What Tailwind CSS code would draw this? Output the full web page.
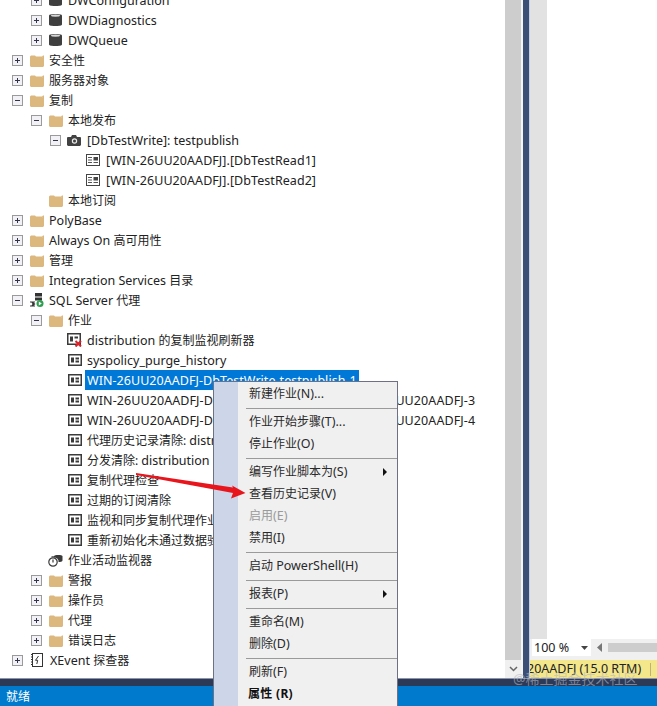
<!DOCTYPE html>
<html lang="zh-CN">
  <head>
    <meta charset="UTF-8" />
    <title>SSMS 对象资源管理器</title>
    <script src="https://cdn.jsdelivr.net/npm/@tailwindcss/browser@4"></script>
  </head>

  <body class="w-[657px] h-[706px] overflow-hidden bg-white">
    <svg width="0" height="0" class="absolute">
      <defs>
        <symbol id="plus" viewBox="0 0 11 11">
          <rect x="0.5" y="0.5" width="10" height="10" fill="#f1f1f6" stroke="#9a9a9a" />
          <path d="M3 5.5h5M5.5 3v5" stroke="#33334a" fill="none" />
        </symbol>
        <symbol id="minus" viewBox="0 0 11 11">
          <rect x="0.5" y="0.5" width="10" height="10" fill="#f1f1f6" stroke="#9a9a9a" />
          <path d="M3 5.5h5" stroke="#33334a" fill="none" />
        </symbol>
        <symbol id="folder" viewBox="0 0 14 13">
          <path d="M0 2.5 1 1.500h4l1 1h6l1 -1h1v10.500l-1 1H1l-1-1z" fill="#dcb87f" />
          <path d="M1 3.500h11l1-1.500v1.500z" fill="#e6cc9f" />
        </symbol>
        <symbol id="db" viewBox="0 0 13 14">
          <path d="M0 2.5C0 .5 13 .5 13 2.5v9c0 2-13 2-13 0z" fill="#3f3f3f" />
          <ellipse cx="6.5" cy="2.6" rx="4.6" ry="1.2" fill="#d8d8d8" />
        </symbol>
        <symbol id="camera" viewBox="0 0 14 11">
          <path d="M0 2.5 1 2h3l1-2h4l1 2h3l1 .5V10l-1 1H1l-1-1z" fill="#424242" />
          <circle cx="7.5" cy="6" r="2.7" fill="#ececec" />
          <circle cx="7.5" cy="6" r="1.5" fill="#424242" />
        </symbol>
        <symbol id="sub" viewBox="0 0 14 12">
          <rect x="0.5" y="0.5" width="13" height="11" fill="#fff" stroke="#444" />
          <path d="M2 3.500h4M2 6h4M2 8.500h4" stroke="#555" fill="none" />
          <rect x="7.5" y="3" width="4.5" height="3.5" fill="#444" />
          <path d="M7.500 8.500h4.500" stroke="#555" fill="none" />
        </symbol>
        <symbol id="job" viewBox="0 0 14 12">
          <rect x="0.75" y="0.75" width="12.5" height="10.5" fill="#fff" stroke="#3a3a3a" stroke-width="1.5" />
          <rect x="3" y="3.5" width="3" height="5" fill="#3a3a3a" />
          <rect x="7.5" y="3.5" width="3.5" height="2" fill="#3a3a3a" />
          <rect x="7.5" y="6.5" width="3.5" height="2" fill="#3a3a3a" />
        </symbol>
        <symbol id="joberr" viewBox="0 0 15 14">
          <rect x="0.75" y="0.75" width="12.5" height="10.5" fill="#fff" stroke="#3a3a3a" stroke-width="1.5" />
          <rect x="3" y="3.5" width="3" height="5" fill="#3a3a3a" />
          <rect x="7.5" y="3.5" width="3.5" height="2" fill="#3a3a3a" />
          <path d="M8.500 8l5.500 5.500M14 8l-5.500 5.500" stroke="#d8232a" stroke-width="2" fill="none" />
        </symbol>
        <symbol id="agent" viewBox="0 0 14 14">
          <rect x="5" y="0" width="7" height="3.5" fill="#333" />
          <rect x="5" y="4.5" width="7" height="3" fill="#333" />
          <path d="M0 8.500h5v1H3.500l2 1.500-2 1.500H5v1H0v-1h1.500l1-1.500-1-1.500H0z" fill="#333" />
          <circle cx="10" cy="10.500" r="3.500" fill="#2e9e4f" />
          <path d="M8.800 8.500v4l3-2z" fill="#fff" />
        </symbol>
        <symbol id="monitor" viewBox="0 0 15 13">
          <path d="M6 2C6 .5 14.500 .5 14.500 2v4.500c0 1-2.500 1.500-4 1.500V6.500A4.500 4.500 0 0 0 6 3.500z" fill="#3a3a3a" />
          <circle cx="5" cy="8" r="4.200" fill="#fff" stroke="#3a3a3a" stroke-width="1.200" />
          <path d="M5 5.500V8.500" stroke="#3a3a3a" stroke-width="1.200" fill="none" />
          <path d="M3.500 2.800h3" stroke="#3a3a3a" fill="none" />
        </symbol>
        <symbol id="xevent" viewBox="0 0 12 14">
          <rect x="1.500" y="0.500" width="10" height="13" fill="#fff" stroke="#333" />
          <path d="M0 1.500h1.500M0 4h1.500M0 6.500h1.500M0 9h1.500M0 11.500h1.500" stroke="#333" fill="none" />
          <path d="M7.500 3 4.500 7.300h2.200L5.800 11" stroke="#333" fill="none" />
        </symbol>
      </defs>
    </svg>

    <div class="relative w-[657px] h-[706px] flex flex-col overflow-hidden font-['Noto_Sans','Noto_Sans_CJK_SC',sans-serif] text-[12px] text-[#222] [&_b]:font-normal [&_b]:text-[12.5px]">
      <div class="flex h-[678px] overflow-hidden">
        <!-- arvore -->
        <div class="w-[505px] shrink-0 overflow-hidden -mt-[10px] whitespace-nowrap [&>div>span]:mt-[2px]">
          <div class="flex items-center h-[20px] pl-[27px]"><svg class="w-[11px] h-[11px] mx-[4px]"><use href="#plus" /></svg><svg class="w-[13px] h-[14px] mx-[3px]"><use href="#db" /></svg><span class="ml-[3px]"><b>DWConfiguration</b></span></div>
          <div class="flex items-center h-[20px] pl-[27px]"><svg class="w-[11px] h-[11px] mx-[4px]"><use href="#plus" /></svg><svg class="w-[13px] h-[14px] mx-[3px]"><use href="#db" /></svg><span class="ml-[3px]"><b>DWDiagnostics</b></span></div>
          <div class="flex items-center h-[20px] pl-[27px]"><svg class="w-[11px] h-[11px] mx-[4px]"><use href="#plus" /></svg><svg class="w-[13px] h-[14px] mx-[3px]"><use href="#db" /></svg><span class="ml-[3px]"><b>DWQueue</b></span></div>
          <div class="flex items-center h-[20px] pl-[8px]"><svg class="w-[11px] h-[11px] mx-[4px]"><use href="#plus" /></svg><svg class="w-[14px] h-[13px] mx-[3px]"><use href="#folder" /></svg><span class="ml-[2px]">安全性</span></div>
          <div class="flex items-center h-[20px] pl-[8px]"><svg class="w-[11px] h-[11px] mx-[4px]"><use href="#plus" /></svg><svg class="w-[14px] h-[13px] mx-[3px]"><use href="#folder" /></svg><span class="ml-[2px]">服务器对象</span></div>
          <div class="flex items-center h-[20px] pl-[8px]"><svg class="w-[11px] h-[11px] mx-[4px]"><use href="#minus" /></svg><svg class="w-[14px] h-[13px] mx-[3px]"><use href="#folder" /></svg><span class="ml-[2px]">复制</span></div>
          <div class="flex items-center h-[20px] pl-[27px]"><svg class="w-[11px] h-[11px] mx-[4px]"><use href="#minus" /></svg><svg class="w-[14px] h-[13px] mx-[3px]"><use href="#folder" /></svg><span class="ml-[2px]">本地发布</span></div>
          <div class="flex items-center h-[20px] pl-[46px]"><svg class="w-[11px] h-[11px] mx-[4px]"><use href="#minus" /></svg><svg class="w-[14px] h-[11px] mx-[2px]"><use href="#camera" /></svg><span class="ml-[4px]"><b>[DbTestWrite]: testpublish</b></span></div>
          <div class="flex items-center h-[20px] pl-[84px]"><svg class="w-[14px] h-[12px] mx-[2px]"><use href="#sub" /></svg><span class="ml-[4px] tracking-[0.06px]"><b>[WIN-26UU20AADFJ].[DbTestRead1]</b></span></div>
          <div class="flex items-center h-[20px] pl-[84px]"><svg class="w-[14px] h-[12px] mx-[2px]"><use href="#sub" /></svg><span class="ml-[4px] tracking-[0.06px]"><b>[WIN-26UU20AADFJ].[DbTestRead2]</b></span></div>
          <div class="flex items-center h-[20px] pl-[46px]"><svg class="w-[14px] h-[13px] mx-[3px]"><use href="#folder" /></svg><span class="ml-[2px]">本地订阅</span></div>
          <div class="flex items-center h-[20px] pl-[8px]"><svg class="w-[11px] h-[11px] mx-[4px]"><use href="#plus" /></svg><svg class="w-[14px] h-[13px] mx-[3px]"><use href="#folder" /></svg><span class="ml-[2px]"><b>PolyBase</b></span></div>
          <div class="flex items-center h-[20px] pl-[8px]"><svg class="w-[11px] h-[11px] mx-[4px]"><use href="#plus" /></svg><svg class="w-[14px] h-[13px] mx-[3px]"><use href="#folder" /></svg><span class="ml-[2px]"><b>Always On </b>高可用性</span></div>
          <div class="flex items-center h-[20px] pl-[8px]"><svg class="w-[11px] h-[11px] mx-[4px]"><use href="#plus" /></svg><svg class="w-[14px] h-[13px] mx-[3px]"><use href="#folder" /></svg><span class="ml-[2px]">管理</span></div>
          <div class="flex items-center h-[20px] pl-[8px]"><svg class="w-[11px] h-[11px] mx-[4px]"><use href="#plus" /></svg><svg class="w-[14px] h-[13px] mx-[3px]"><use href="#folder" /></svg><span class="ml-[2px]"><b>Integration Services </b>目录</span></div>
          <div class="flex items-center h-[20px] pl-[8px]"><svg class="w-[11px] h-[11px] mx-[4px]"><use href="#minus" /></svg><svg class="w-[14px] h-[14px] mx-[3px]"><use href="#agent" /></svg><span class="ml-[2px]"><b>SQL Server </b>代理</span></div>
          <div class="flex items-center h-[20px] pl-[27px]"><svg class="w-[11px] h-[11px] mx-[4px]"><use href="#minus" /></svg><svg class="w-[14px] h-[13px] mx-[3px]"><use href="#folder" /></svg><span class="ml-[2px]">作业</span></div>
          <div class="flex items-center h-[20px] pl-[65px]"><svg class="w-[15px] h-[14px] mx-[2px]"><use href="#joberr" /></svg><span class="ml-[3px]"><b>distribution </b>的复制监视刷新器</span></div>
          <div class="flex items-center h-[20px] pl-[65px]"><svg class="w-[14px] h-[12px] mx-[3px]"><use href="#job" /></svg><span class="ml-[2px]"><b>syspolicy_purge_history</b></span></div>
          <div class="flex items-center h-[20px] pl-[65px]"><svg class="w-[14px] h-[12px] mx-[3px]"><use href="#job" /></svg><span class="mt-0! px-[2px] h-[20px] bg-[#0078d7] text-white leading-[21px] tracking-[0.05px]"><b>WIN-26UU20AADFJ-DbTestWrite-testpublish-1</b></span></div>
          <div class="flex items-center h-[20px] pl-[65px]"><svg class="w-[14px] h-[12px] mx-[3px]"><use href="#job" /></svg><span class="ml-[2px] tracking-[0.09px]"><b>WIN-26UU20AADFJ-DbTestWrite-testpublish-WIN-26UU20AADFJ-3</b></span></div>
          <div class="flex items-center h-[20px] pl-[65px]"><svg class="w-[14px] h-[12px] mx-[3px]"><use href="#job" /></svg><span class="ml-[2px] tracking-[0.09px]"><b>WIN-26UU20AADFJ-DbTestWrite-testpublish-WIN-26UU20AADFJ-4</b></span></div>
          <div class="flex items-center h-[20px] pl-[65px]"><svg class="w-[14px] h-[12px] mx-[3px]"><use href="#job" /></svg><span class="ml-[2px]">代理历史记录清除: <b>distribution</b></span></div>
          <div class="flex items-center h-[20px] pl-[65px]"><svg class="w-[14px] h-[12px] mx-[3px]"><use href="#job" /></svg><span class="ml-[2px]">分发清除: <b>distribution</b></span></div>
          <div class="flex items-center h-[20px] pl-[65px]"><svg class="w-[14px] h-[12px] mx-[3px]"><use href="#job" /></svg><span class="ml-[2px]">复制代理检查</span></div>
          <div class="flex items-center h-[20px] pl-[65px]"><svg class="w-[14px] h-[12px] mx-[3px]"><use href="#job" /></svg><span class="ml-[2px]">过期的订阅清除</span></div>
          <div class="flex items-center h-[20px] pl-[65px]"><svg class="w-[14px] h-[12px] mx-[3px]"><use href="#job" /></svg><span class="ml-[2px]">监视和同步复制代理作业</span></div>
          <div class="flex items-center h-[20px] pl-[65px]"><svg class="w-[14px] h-[12px] mx-[3px]"><use href="#job" /></svg><span class="ml-[2px]">重新初始化未通过数据验证的订阅</span></div>
          <div class="flex items-center h-[20px] pl-[46px]"><svg class="w-[15px] h-[13px] mx-[2px]"><use href="#monitor" /></svg><span class="ml-[3px]">作业活动监视器</span></div>
          <div class="flex items-center h-[20px] pl-[27px]"><svg class="w-[11px] h-[11px] mx-[4px]"><use href="#plus" /></svg><svg class="w-[14px] h-[13px] mx-[3px]"><use href="#folder" /></svg><span class="ml-[2px]">警报</span></div>
          <div class="flex items-center h-[20px] pl-[27px]"><svg class="w-[11px] h-[11px] mx-[4px]"><use href="#plus" /></svg><svg class="w-[14px] h-[13px] mx-[3px]"><use href="#folder" /></svg><span class="ml-[2px]">操作员</span></div>
          <div class="flex items-center h-[20px] pl-[27px]"><svg class="w-[11px] h-[11px] mx-[4px]"><use href="#plus" /></svg><svg class="w-[14px] h-[13px] mx-[3px]"><use href="#folder" /></svg><span class="ml-[2px]">代理</span></div>
          <div class="flex items-center h-[20px] pl-[27px]"><svg class="w-[11px] h-[11px] mx-[4px]"><use href="#plus" /></svg><svg class="w-[14px] h-[13px] mx-[3px]"><use href="#folder" /></svg><span class="ml-[2px]">错误日志</span></div>
          <div class="flex items-center h-[20px] pl-[8px]"><svg class="w-[11px] h-[11px] mx-[4px]"><use href="#plus" /></svg><svg class="w-[12px] h-[14px] mx-[4px]"><use href="#xevent" /></svg><span class="ml-[3px]"><b>XEvent </b>探查器</span></div>
        </div>

        <!-- barra de rolagem -->
        <div class="w-[16px] shrink-0 flex flex-col bg-[#f0f0f0]">
          <div class="h-[660px] bg-[#cdcdcd]"></div>
          <div class="flex-1 flex items-center justify-center">
            <svg width="9" height="6" viewBox="0 0 9 6"><path d="M1 1l3.500 3.500L8 1" stroke="#666" stroke-width="1.500" fill="none" /></svg>
          </div>
        </div>
        <div class="w-[2px] shrink-0 bg-[#f4f4f4]"></div>
        <div class="w-[7px] shrink-0 bg-[#3b4f76] border-r border-[#c6cfe6]"></div>

        <!-- painel direito -->
        <div class="flex-1 flex flex-col min-w-0">
          <div class="flex-1 flex">
            <div class="w-[17px] bg-[#e2e2e2]"></div>
            <div class="flex-1 bg-white"></div>
          </div>
          <div class="h-[21px] flex bg-[#f0f0f0]">
            <div class="ml-[2px] w-[59px] h-[17px] bg-white flex items-center justify-between pl-[2px] pr-[3px] pt-px text-[#222]">
              <b>100 %</b>
              <svg width="7" height="4" viewBox="0 0 7 4"><path d="M0 0h7L3.500 4z" fill="#444" /></svg>
            </div>
            <div class="flex-1 h-[17px] flex items-center">
              <svg class="ml-[6px]" width="5" height="9" viewBox="0 0 5 9"><path d="M5 0v9L0 4.500z" fill="#777" /></svg>
              <div class="ml-[6px] flex-1 h-[9px] bg-[#cdcdcd]"></div>
            </div>
          </div>
          <div class="h-[18px] bg-[#f4e68a] flex items-center justify-between whitespace-nowrap overflow-hidden">
            <b class="-ml-[3px]">20AADFJ (15.0 RTM)</b>
            <span class="w-px h-[13px] bg-[#bdb27a] mr-[6px]"></span>
          </div>
        </div>
      </div>

      <div class="h-[8px] bg-[#2c3a58] border-t border-[#8d93a8]"></div>
      <div class="h-[20px] bg-[#007acc] text-white flex items-center pl-[6px] pt-px">就绪</div>

      <!-- menu de contexto -->
      <div class="absolute left-[213px] top-[381px] w-[185px] h-[330px] bg-[#f0f0f0] border border-[#6c7186] flex whitespace-nowrap">
        <div class="w-[24px] shrink-0 bg-[#cdd5e8]"></div>
        <div class="flex-1 pt-[1px] text-[#2a2a2a]">
          <div class="h-[22px] flex items-center pl-[11px]"><span>新建作业<b>(N)...</b></span></div>
          <div class="h-[6px] flex items-center pl-[8px]"><div class="w-full h-px bg-[#9a9a9a]"></div></div>
          <div class="h-[22px] flex items-center pl-[11px]"><span>作业开始步骤<b>(T)...</b></span></div>
          <div class="h-[22px] flex items-center pl-[11px]"><span>停止作业<b>(O)</b></span></div>
          <div class="h-[6px] flex items-center pl-[8px]"><div class="w-full h-px bg-[#9a9a9a]"></div></div>
          <div class="h-[22px] flex items-center justify-between pl-[11px] pr-[10px]">
            <span>编写作业脚本为<b>(S)</b></span>
            <svg width="4" height="8" viewBox="0 0 4 8"><path d="M0 0l4 4-4 4z" fill="#111" /></svg>
          </div>
          <div class="h-[22px] flex items-center pl-[11px]"><span>查看历史记录<b>(V)</b></span></div>
          <div class="h-[22px] flex items-center pl-[11px] text-[#9a9a9a]"><span>启用<b>(E)</b></span></div>
          <div class="h-[22px] flex items-center pl-[11px]"><span>禁用<b>(I)</b></span></div>
          <div class="h-[6px] flex items-center pl-[8px]"><div class="w-full h-px bg-[#9a9a9a]"></div></div>
          <div class="h-[22px] flex items-center pl-[11px]"><span>启动 <b>PowerShell(H)</b></span></div>
          <div class="h-[6px] flex items-center pl-[8px]"><div class="w-full h-px bg-[#9a9a9a]"></div></div>
          <div class="h-[22px] flex items-center justify-between pl-[11px] pr-[10px]">
            <span>报表<b>(P)</b></span>
            <svg width="4" height="8" viewBox="0 0 4 8"><path d="M0 0l4 4-4 4z" fill="#111" /></svg>
          </div>
          <div class="h-[6px] flex items-center pl-[8px]"><div class="w-full h-px bg-[#9a9a9a]"></div></div>
          <div class="h-[22px] flex items-center pl-[11px]"><span>重命名<b>(M)</b></span></div>
          <div class="h-[22px] flex items-center pl-[11px]"><span>删除<b>(D)</b></span></div>
          <div class="h-[6px] flex items-center pl-[8px]"><div class="w-full h-px bg-[#9a9a9a]"></div></div>
          <div class="h-[22px] flex items-center pl-[11px]"><span>刷新<b>(F)</b></span></div>
          <div class="h-[22px] flex items-center pl-[10px] font-bold text-[#111] tracking-[0.3px]">属性 (R)</div>
        </div>
      </div>

      <!-- seta vermelha -->
      <svg class="absolute left-[135px] top-[470px]" width="112" height="30" viewBox="0 0 112 30">
        <path d="M1 3 98 17.500 97 15.500 110.500 23 96 28.500 98 23 1 5z" fill="#e8161c" />
      </svg>

      <!-- marca d'agua -->
      <div class="absolute left-[513px] top-[668px] text-[14px] text-[#b4b8c0]/60 whitespace-nowrap">@稀土掘金技术社区</div>
    </div>
  </body>
</html>
